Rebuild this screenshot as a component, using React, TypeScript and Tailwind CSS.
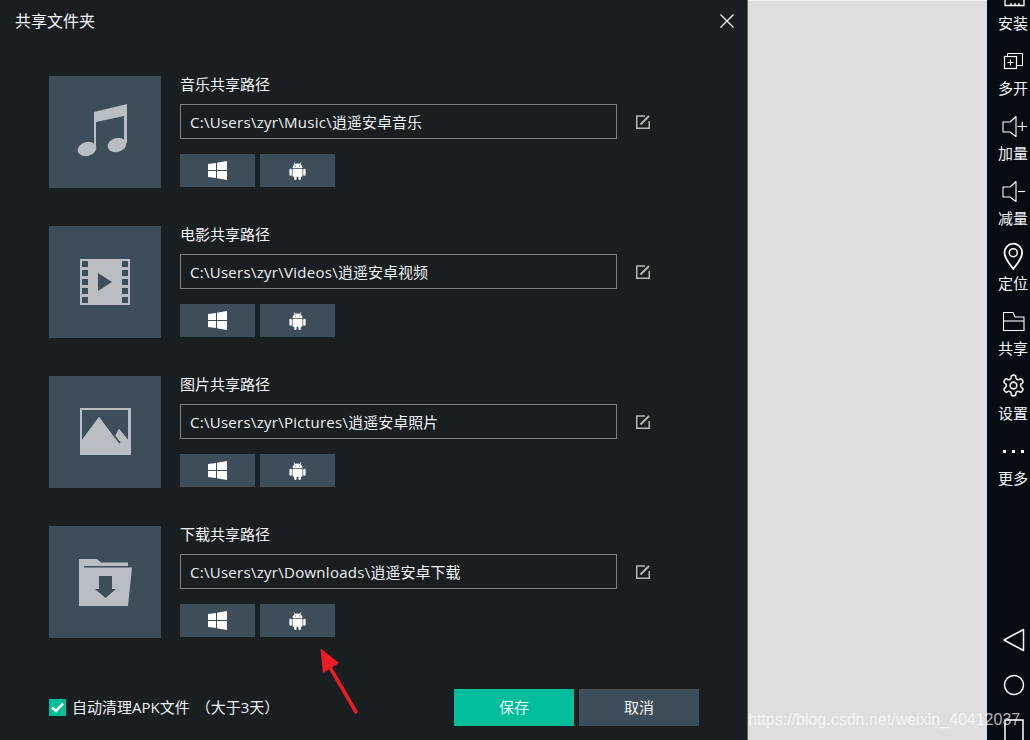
const tile = "#3d4e59";
const ic = "#b8bec3";
const font = { fontFamily: '"Open Sans","Noto Sans CJK SC",sans-serif' };
const cjk = { fontFamily: '"Noto Sans CJK SC",sans-serif' };

const MusicIcon = () => (
  <svg width="112" height="112" viewBox="0 0 112 112" fill={ic}>
    <path d="M45 36 L78 28 L78 67 L75 67 L75 40 L47 46 L47 74 L45 74 Z" />
    <ellipse cx="38" cy="73" rx="9.5" ry="7" transform="rotate(-15 38 73)" />
    <ellipse cx="68" cy="69" rx="9.5" ry="7" transform="rotate(-15 68 69)" />
  </svg>
);

const VideoIcon = () => (
  <svg width="112" height="112" viewBox="0 0 112 112">
    <rect x="31" y="33" width="50" height="46" fill={ic} />
    {[35, 44, 53, 62, 71].map((y) => (
      <g key={y} fill={tile}>
        <rect x="33" y={y} width="6" height="6" />
        <rect x="73" y={y} width="6" height="6" />
      </g>
    ))}
    <path d="M49 47 L63 56 L49 65 Z" fill={tile} />
  </svg>
);

const PictureIcon = () => (
  <svg width="112" height="112" viewBox="0 0 112 112" fill={ic}>
    <path fillRule="evenodd" d="M31 32 H82 V79 H31 Z M33 34 V64 L50 41 L66 62 L70 53 L79 64 V34 Z" />
    <path d="M33 64 H79 V78 H33 Z" />
    <path d="M33 64 L50 41 L65 62 L69 67 H33 Z M66 60 L70 53 L80 65 L71 65 Z" />
    <path d="M64 58 L71 67" stroke={tile} strokeWidth="1.5" fill="none" />
  </svg>
);

const FolderIcon = () => (
  <svg width="112" height="112" viewBox="0 0 112 112" fill={ic}>
    <path d="M30 33 H48 L52 36.5 H79 V40 H35 V42 H30 Z" />
    <path d="M30 42 L35 42 L35 41.5 H83 L79 80 H30 Z" />
    <path d="M50 50 H63 V63 H67 L56.5 72 L46 63 H50 Z" fill={tile} />
  </svg>
);

const EditIcon = () => (
  <svg width="14" height="14" viewBox="0 0 14 14" fill="none" stroke="#b5b7b8">
    <path d="M9 1 H0.75 V13.25 H13.25 V6" strokeWidth="1.5" />
    <path d="M4.5 9.5 L13 1" strokeWidth="2" />
  </svg>
);

const WinIcon = () => (
  <svg width="19" height="19" viewBox="0 0 19 19" fill="#fff">
    <path d="M0 3 L8 1.9 V9 H0 Z M9 1.7 L19 0 V9 H9 Z M0 10 H8 V17 L0 16 Z M9 10 H19 V19 L9 17.3 Z" />
  </svg>
);

const AndroidIcon = () => (
  <svg width="17" height="18" viewBox="0 0 17 18" fill="#fff">
    <path d="M5 0.3 L6.3 2.8 M12 0.3 L10.7 2.8" stroke="#fff" strokeWidth="0.8" />
    <path d="M3.5 6 A5 4.6 0 0 1 13.5 6 Z" />
    <rect x="3.5" y="6.7" width="10" height="8" rx="1" />
    <rect x="0.4" y="6.7" width="2.4" height="7" rx="1.2" />
    <rect x="14.2" y="6.7" width="2.4" height="7" rx="1.2" />
    <rect x="5.2" y="13" width="2.4" height="5" rx="1.2" />
    <rect x="9.4" y="13" width="2.4" height="5" rx="1.2" />
    <circle cx="6.4" cy="4" r="0.6" fill={tile} />
    <circle cx="10.6" cy="4" r="0.6" fill={tile} />
  </svg>
);

const rows = [
  { label: "音乐共享路径", dir: "C:\\Users\\zyr\\Music\\", name: "逍遥安卓音乐", icon: <MusicIcon /> },
  { label: "电影共享路径", dir: "C:\\Users\\zyr\\Videos\\", name: "逍遥安卓视频", icon: <VideoIcon /> },
  { label: "图片共享路径", dir: "C:\\Users\\zyr\\Pictures\\", name: "逍遥安卓照片", icon: <PictureIcon /> },
  { label: "下载共享路径", dir: "C:\\Users\\zyr\\Downloads\\", name: "逍遥安卓下载", icon: <FolderIcon /> },
];

const Row = ({ label, dir, name, icon }: { label: string; dir: string; name: string; icon: React.ReactNode }) => (
  <div className="flex h-[112px]">
    <div className="w-[112px] h-[112px] shrink-0 bg-[#3d4e59]">{icon}</div>
    <div className="ml-[19px] flex flex-col">
      <div className="h-[18px] leading-[18px] text-[15px] text-[#f2f4f5] -translate-y-px" style={cjk}>{label}</div>
      <div className="mt-[10px] flex items-center">
        <div className="w-[437px] h-[35px] border border-[#7d7f80] pl-[9px] pt-px leading-[33px] text-[15px] text-[#eef1f3] whitespace-nowrap">
          <span className="tracking-[0.28px]">{dir}</span>
          <span>{name}</span>
        </div>
        <div className="ml-[19px] flex">
          <EditIcon />
        </div>
      </div>
      <div className="mt-[15px] flex gap-[5px]">
        <div className="w-[75px] h-[33px] bg-[#3d4e59] flex items-center justify-center">
          <WinIcon />
        </div>
        <div className="w-[75px] h-[33px] bg-[#3d4e59] flex items-center justify-center">
          <AndroidIcon />
        </div>
      </div>
    </div>
  </div>
);

const side = [
  {
    t: "安装",
    i: (
      <svg width="30" height="30" viewBox="0 0 30 30" fill="none" stroke="#fff" strokeWidth="1.3">
        <path d="M7 10 V25.5 H26 V10" />
        <path d="M13 23 V25 M17 23 V25 M21 23 V25" />
      </svg>
    ),
  },
  {
    t: "多开",
    i: (
      <svg width="30" height="30" viewBox="0 0 30 30" fill="none" stroke="#fff" strokeWidth="1">
        <path d="M9.5 11 V8.5 H24.5 V20.5 H19" />
        <rect x="6.5" y="11.5" width="12" height="12" strokeWidth="1.2" />
        <path d="M9.5 17.5 H15.5 M12.5 14.5 V20.5" />
      </svg>
    ),
  },
  {
    t: "加量",
    i: (
      <svg width="30" height="30" viewBox="0 0 30 30" fill="none" stroke="#fff" strokeWidth="1.1">
        <path d="M5 12 H12 L18 6.5 V26.5 L12 22 H5 Z" strokeLinejoin="round" />
        <path d="M19.5 16.5 H29 M24.25 12 V21" />
      </svg>
    ),
  },
  {
    t: "减量",
    i: (
      <svg width="30" height="30" viewBox="0 0 30 30" fill="none" stroke="#fff" strokeWidth="1.1">
        <path d="M5 12 H12 L18 6.5 V26.5 L12 22 H5 Z" strokeLinejoin="round" />
        <path d="M20 16.5 H27" />
      </svg>
    ),
  },
  {
    t: "定位",
    i: (
      <svg width="30" height="30" viewBox="0 0 30 30" fill="none" stroke="#fff" strokeWidth="1.8">
        <path d="M15.3 29 C10.5 22.5 6.5 18.5 6.5 12.5 A8.8 8.8 0 0 1 24.1 12.5 C24.1 18.5 20 22.5 15.3 29 Z" />
        <circle cx="15.3" cy="12.7" r="4" strokeWidth="1.5" />
      </svg>
    ),
  },
  {
    t: "共享",
    i: (
      <svg width="30" height="30" viewBox="0 0 30 30" fill="none" stroke="#fff" strokeWidth="1.1">
        <path d="M5.5 7.5 H15 L17 12 H26 V25.5 H5.5 Z" />
        <path d="M5.5 16 H26" />
      </svg>
    ),
  },
  {
    t: "设置",
    i: (
      <svg width="25" height="25" viewBox="0 0 24 24" fill="none" stroke="#e8e8e8" strokeWidth="1.6" className="mx-auto mt-[3px]">
        <path d="M12.22 2h-.44a2 2 0 0 0-2 2v.18a2 2 0 0 1-1 1.73l-.43.25a2 2 0 0 1-2 0l-.15-.08a2 2 0 0 0-2.73.73l-.22.38a2 2 0 0 0 .73 2.73l.15.1a2 2 0 0 1 1 1.72v.51a2 2 0 0 1-1 1.74l-.15.09a2 2 0 0 0-.73 2.73l.22.38a2 2 0 0 0 2.73.73l.15-.08a2 2 0 0 1 2 0l.43.25a2 2 0 0 1 1 1.73V20a2 2 0 0 0 2 2h.44a2 2 0 0 0 2-2v-.18a2 2 0 0 1 1-1.73l.43-.25a2 2 0 0 1 2 0l.15.08a2 2 0 0 0 2.73-.73l.22-.39a2 2 0 0 0-.73-2.73l-.15-.08a2 2 0 0 1-1-1.74v-.5a2 2 0 0 1 1-1.74l.15-.09a2 2 0 0 0 .73-2.73l-.22-.38a2 2 0 0 0-2.73-.73l-.15.08a2 2 0 0 1-2 0l-.43-.25a2 2 0 0 1-1-1.73V4a2 2 0 0 0-2-2z" />
        <circle cx="12" cy="12" r="3.2" />
      </svg>
    ),
  },
  {
    t: "更多",
    i: (
      <svg width="30" height="30" viewBox="0 0 30 30" fill="#fff">
        <rect x="5" y="15" width="3" height="3" />
        <rect x="14" y="15" width="3" height="3" />
        <rect x="23" y="15" width="3" height="3" />
      </svg>
    ),
  },
];

export default function App() {
  return (
    <div className="relative w-[1030px] h-[740px] overflow-hidden flex bg-[#dedede]" style={font}>
      <div className="w-[748px] h-full shrink-0 bg-[#191e21] border-r border-[#4a6b62] relative">
        <div className="flex items-center justify-between pl-[15px] pr-[13px] h-[42px]">
          <span className="text-[16px] leading-[22px] text-[#f2f4f5] -translate-y-px" style={cjk}>共享文件夹</span>
          <svg width="14" height="14" viewBox="0 0 14 14" stroke="#fff" strokeWidth="1.2">
            <path d="M0.5 0.5 L13.5 13.5 M13.5 0.5 L0.5 13.5" />
          </svg>
        </div>
        <div className="ml-[49px] mt-[34px] flex flex-col gap-[38px]">
          {rows.map((r) => (
            <Row key={r.label} {...r} />
          ))}
        </div>
        <div className="mt-[51px] ml-[49px] flex items-center h-[37px] mr-[48px]">
          <div className="w-[17px] h-[17px] bg-[#00bd9c] flex items-center justify-center">
            <svg width="13" height="11" viewBox="0 0 13 11" fill="none" stroke="#fff" strokeWidth="2.4">
              <path d="M1 5.5 L5 9 L12 1.5" />
            </svg>
          </div>
          <span className="ml-[6px] text-[15px] text-[#eef1f3]">
            自动清理APK文件<span className="ml-[6px]">（大于3天）</span>
          </span>
          <div className="ml-auto flex gap-[5px]">
            <div className="w-[120px] h-[37px] bg-[#00bd9c] flex items-center justify-center text-[15px] text-[#e9f7f4]" style={cjk}>保存</div>
            <div className="w-[120px] h-[37px] bg-[#3d4e59] flex items-center justify-center text-[15px] text-[#eef1f3]" style={cjk}>取消</div>
          </div>
        </div>
      </div>

      <div className="flex-1 border-t border-[#eeeeee]" />

      <div className="w-[43px] h-full shrink-0 bg-[#070b12] flex flex-col pl-[11px]">
        <div className="-mt-[30px] flex flex-col">
          {side.map((s) => (
            <div key={s.t} className="w-[30px] h-[65px] flex flex-col items-center">
              <div className="mt-[10px] w-[30px] h-[30px]">{s.i}</div>
              <div className="mt-[3px] h-5 leading-5 text-[15px] text-[#f4f6f8] whitespace-nowrap" style={cjk}>{s.t}</div>
            </div>
          ))}
        </div>
        <div className="mt-auto flex flex-col items-center -mb-[5px]">
          <svg width="30" height="30" viewBox="0 0 30 30" fill="none" stroke="#fff" strokeWidth="1.5" className="mb-[15px]">
            <path d="M5 15 L24.5 4.5 V25.5 Z" strokeLinejoin="round" />
          </svg>
          <svg width="30" height="30" viewBox="0 0 30 30" fill="none" stroke="#fff" strokeWidth="1.5" className="mb-[15px]">
            <circle cx="15" cy="15" r="9.5" />
          </svg>
          <svg width="30" height="30" viewBox="0 0 30 30" fill="none" stroke="#fff" strokeWidth="1.5">
            <rect x="6" y="5" width="18" height="25" />
          </svg>
        </div>
      </div>

      {/* annotation arrow */}
      <svg className="absolute left-[315px] top-[640px]" width="50" height="80" viewBox="0 0 50 80">
        <path d="M5.5 8.5 L24 23 L16 28 L8 33 Z" fill="#ed1c24" />
        <path d="M13 24 L41 72" stroke="#ed1c24" strokeWidth="3.5" strokeLinecap="round" />
      </svg>

      {/* watermark */}
      <div
        className="absolute left-[748px] top-[708px] text-[16px] leading-[24px] text-[#ffffffb0] whitespace-nowrap"
        style={{ fontFamily: '"Liberation Sans",sans-serif' }}
      >
        https://blog.csdn.net/weixin_40412037
      </div>
    </div>
  );
}
